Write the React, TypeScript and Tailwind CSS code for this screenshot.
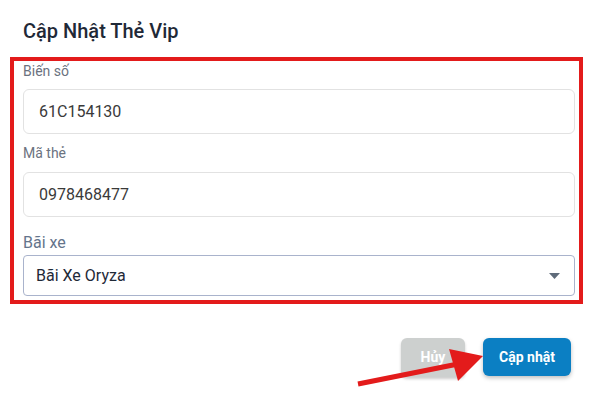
const fieldLabel = "text-[14px] leading-[20px] text-[#6b7280]";
const inputBox =
  "h-[45px] w-full rounded-[6px] border border-[#e2e2e2] bg-white px-[15px] text-[16px] text-[#3a3a3a] outline-none";

const App = () => {
  return (
    <div
      className="relative h-[393px] w-[596px] overflow-hidden bg-white"
      style={{ fontFamily: "Roboto, 'Noto Sans', sans-serif" }}
    >
      {/* Title */}
      <h2 className="ml-[23px] pt-[19px] text-[20px] font-medium leading-[25px] text-[#1f2937]">
        Cập Nhật Thẻ Vip
      </h2>

      {/* Form (red highlight) */}
      <div className="ml-[10px] mt-[13px] w-[573px] border-4 border-[#e31b1b] pb-[4px] pl-[9px] pr-[4px]">
        <label className={`block ${fieldLabel}`}>Biến số</label>
        <input className={`mt-[8px] ${inputBox}`} defaultValue="61C154130" />

        <label className={`mt-[9px] block ${fieldLabel}`}>Mã thẻ</label>
        <input className={`mt-[9px] ${inputBox}`} defaultValue="0978468477" />

        <label className="mt-[14px] block text-[16px] leading-[24px] text-[#64748b]">
          Bãi xe
        </label>
        <div className="flex h-[41px] items-center justify-between rounded-[4px] border border-[#a9b3cc] pl-[12px] pr-[14px]">
          <span className="text-[16px] text-[#1f2937]">Bãi Xe Oryza</span>
          <svg width="11" height="6" viewBox="0 0 11 6">
            <path d="M0 0 L11 0 L5.5 6 Z" fill="#5f6b7a" />
          </svg>
        </div>
      </div>

      {/* Actions */}
      <div className="mt-[34px] flex justify-end gap-[18px] pr-[25px]">
        <button className="h-[39px] w-[64px] rounded-[6px] bg-[#cdd0cf] text-[14px] font-bold text-white shadow-[0_2px_3px_rgba(0,0,0,0.2)]">
          Hủy
        </button>
        <button className="h-[38px] w-[88px] rounded-[6px] bg-[#0b7fc3] text-[14px] font-bold text-white shadow-[0_2px_4px_rgba(0,0,0,0.25)]">
          Cập nhật
        </button>
      </div>

      {/* Annotation arrow */}
      <svg
        className="pointer-events-none absolute left-0 top-0"
        width="596"
        height="393"
      >
        <line x1="358" y1="384" x2="458" y2="364" stroke="#e31b1b" strokeWidth="5" />
        <polygon points="449,349 483,356 458,381" fill="#e31b1b" />
      </svg>
    </div>
  );
};

export default App;
